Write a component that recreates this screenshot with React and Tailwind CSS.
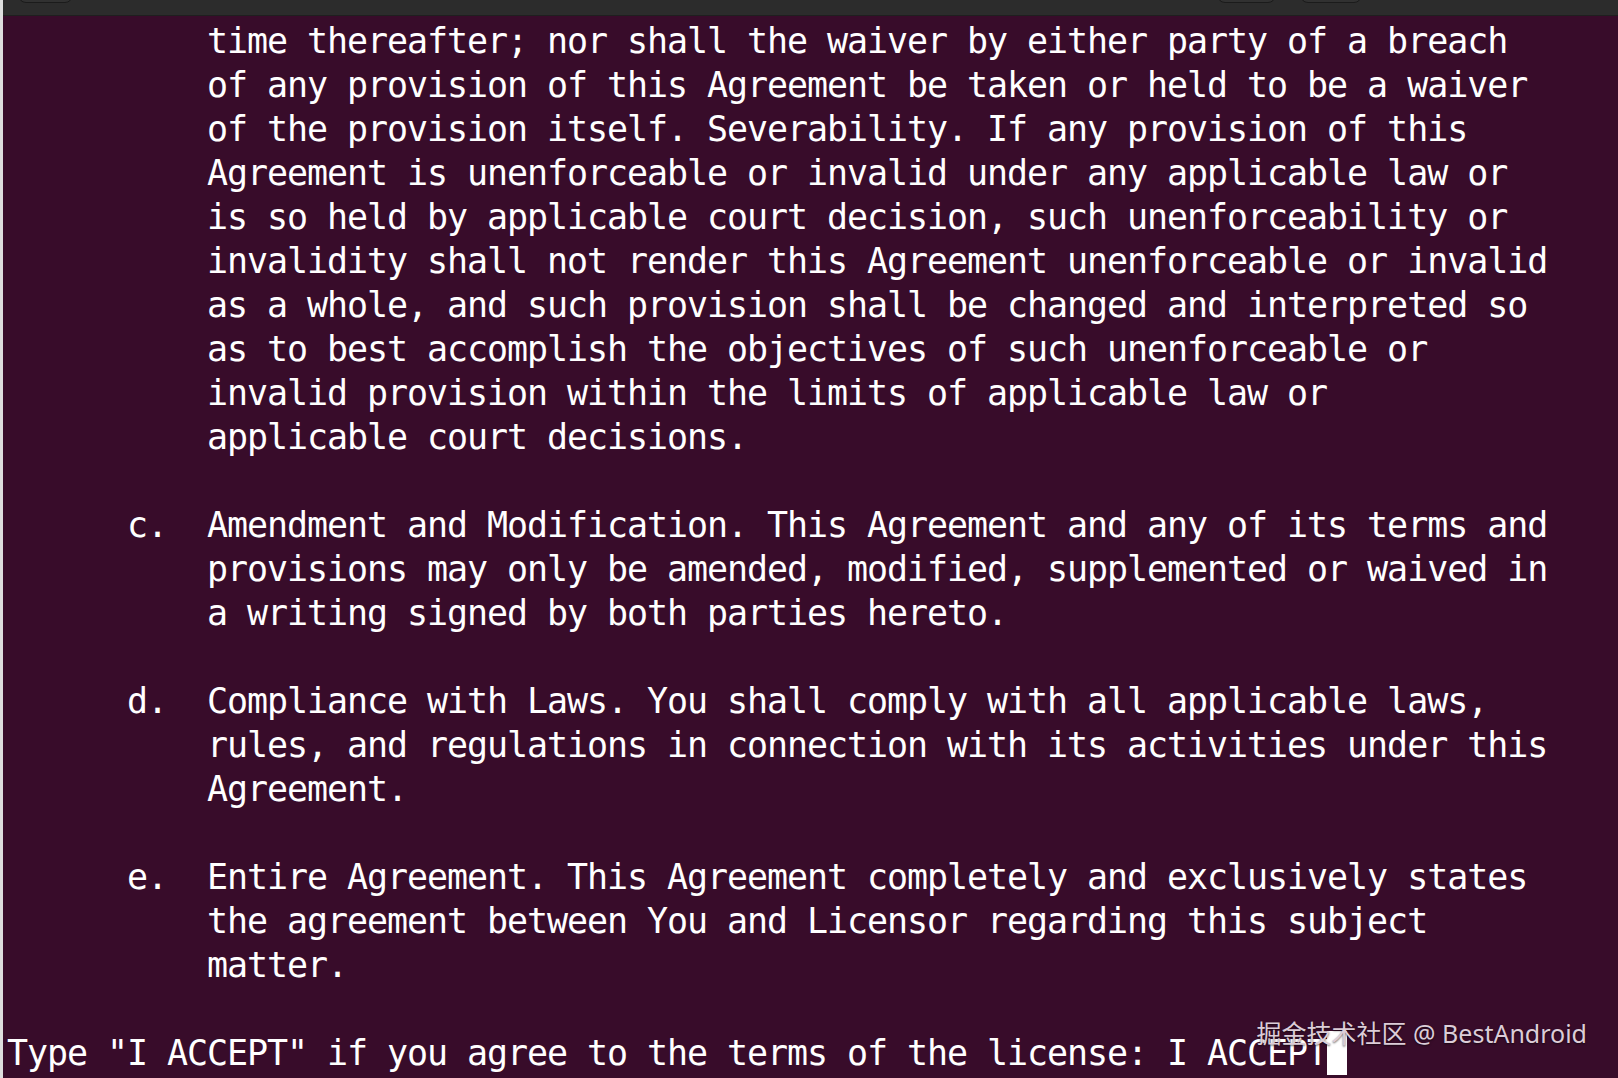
import React from "react";

const lines = [
  "          time thereafter; nor shall the waiver by either party of a breach",
  "          of any provision of this Agreement be taken or held to be a waiver",
  "          of the provision itself. Severability. If any provision of this",
  "          Agreement is unenforceable or invalid under any applicable law or",
  "          is so held by applicable court decision, such unenforceability or",
  "          invalidity shall not render this Agreement unenforceable or invalid",
  "          as a whole, and such provision shall be changed and interpreted so",
  "          as to best accomplish the objectives of such unenforceable or",
  "          invalid provision within the limits of applicable law or",
  "          applicable court decisions.",
  "",
  "      c.  Amendment and Modification. This Agreement and any of its terms and",
  "          provisions may only be amended, modified, supplemented or waived in",
  "          a writing signed by both parties hereto.",
  "",
  "      d.  Compliance with Laws. You shall comply with all applicable laws,",
  "          rules, and regulations in connection with its activities under this",
  "          Agreement.",
  "",
  "      e.  Entire Agreement. This Agreement completely and exclusively states",
  "          the agreement between You and Licensor regarding this subject",
  "          matter.",
  "",
];

function TitleBar() {
  return (
    <div className="h-[16px] flex items-start bg-[#2c2c2c] border-b border-[#1f1f1f] overflow-hidden">
      <div className="ml-[15px] w-[55px] h-[24px] -mt-[21px] rounded-lg border border-[#1b1b1b] bg-[#313131]" />
      <div className="ml-[1144px] w-[59px] h-[24px] -mt-[21px] rounded-lg border border-[#1b1b1b] bg-[#313131]" />
      <div className="ml-[24px] w-[62px] h-[24px] -mt-[21px] rounded-lg border border-[#1b1b1b] bg-[#313131]" />
    </div>
  );
}

export default function App() {
  return (
    <div className="w-full h-[1078px] flex overflow-hidden bg-[#380c2a]">
      <div className="w-[3px] shrink-0 bg-[#dedede]" />
      <div className="flex-1 flex flex-col relative">
        <TitleBar />
        <div
          className="pt-[3px] pl-[4px] text-white text-[35px] tracking-[-1.07px] whitespace-pre"
          style={{ fontFamily: '"DejaVu Sans Mono", "Liberation Mono", monospace' }}
        >
          {lines.map((line, i) => (
            <div key={i} className="h-[44px] leading-[44px]">
              {line}
            </div>
          ))}
          <div className="h-[44px] leading-[44px] flex items-start">
            <span>Type "I ACCEPT" if you agree to the terms of the license: I ACCEPT</span>
            <span className="inline-block w-[20px] h-[44px] bg-white" />
          </div>
        </div>
        <div
          className="absolute right-[31px] bottom-[32px] text-[25px] leading-none text-[#dccdd8] whitespace-nowrap [text-shadow:0_1px_2px_rgba(0,0,0,0.6)]"
          style={{ fontFamily: '"Noto Sans", "Noto Sans CJK SC", sans-serif' }}
        >
          掘金技术社区 @ BestAndroid
        </div>
      </div>
    </div>
  );
}
